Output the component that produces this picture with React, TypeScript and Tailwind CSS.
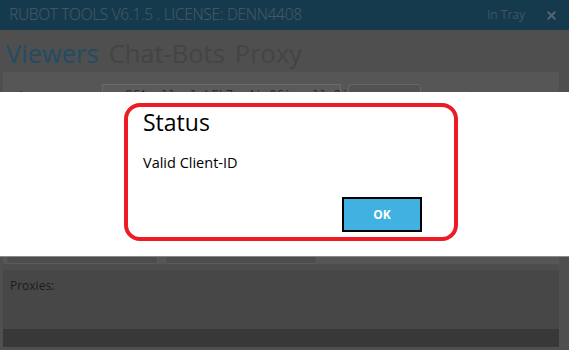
import { X } from "lucide-react";

export default function App() {
  return (
    <div className="relative w-[569px] h-[350px] overflow-hidden bg-[#4f4f4f] font-['Open_Sans',sans-serif]">
      {/* title bar */}
      <div className="h-[30px] bg-[#163a4d] flex items-center pl-[9px] pr-[11px]">
        <span className="text-[15.5px] font-light text-[#4a5c66] tracking-[-0.3px]">
          RUBOT TOOLS V6.1.5 . LICENSE: DENN4408
        </span>
        <span className="ml-auto text-[12px] text-[#3e5562]">In Tray</span>
        <X className="ml-[20px] w-[13px] h-[13px] text-[#55666f]" strokeWidth={3.5} />
      </div>

      {/* tabs */}
      <div className="h-[42px] flex items-center gap-[10px] pl-[6px] pt-[6px] text-[25.5px] leading-none">
        <span className="text-[#234c63]">Viewers</span>
        <span className="text-[#444444]">Chat-Bots</span>
        <span className="text-[#444444]">Proxy</span>
      </div>

      {/* content */}
      <div className="mx-[3px] w-[556px] h-[275px] flex flex-col bg-[#565656]">
        <div className="flex items-start gap-[7px] pt-[12px] pl-[9px] h-[192px]">
          <span className="w-[83px] text-[12px] text-[#1f1f1f] pt-[4px]">Client-ID</span>
          <div className="w-[239px] h-[24px] bg-[#5a5a5a] border border-[#6a6a6a] text-[12px] text-[#2a2a2a] px-[22px] pt-[2px] font-['Liberation_Mono',monospace]">
            8f1..ll..l.LFLZ..4i.6fi...ll.8i
          </div>
          <div className="w-[73px] h-[24px] bg-[#525252] border border-[#666666] rounded-[3px]" />
          <span className="text-[12px] text-[#25506a] pt-[4px]">Use... Client-ID</span>
        </div>
        <div className="flex gap-[7px] pl-[3px] -mt-[40px] h-[40px]">
          <div className="w-[152px] h-full bg-[#4d4d4d] border border-[#5b5b5b] rounded-[3px]" />
          <div className="w-[152px] h-full bg-[#4d4d4d] border border-[#5b5b5b] rounded-[3px]" />
        </div>
        <div className="h-[6px] bg-[#4d4d4d]" />
        <div className="flex-1 bg-[#474747] pl-[7px] pt-[8px] text-[12px] leading-[16px] text-[#1c1c1c]">
          Proxies:
        </div>
        <div className="h-[18px] bg-[#383838]" />
      </div>

      {/* status dialog */}
      <div className="absolute left-0 right-0 top-[92px] h-[165px] bg-white border-b border-[#8a8a8a] pt-[11px]">
        <div className="ml-[124px] w-[334px] h-[138px] border-[4px] border-[#ed1c24] rounded-[16px] flex flex-col pl-[15px] pr-[32px] pb-[5px]">
          <div className="text-[23px] leading-[30px] text-black">Status</div>
          <div className="mt-[16px] text-[14.5px] leading-[20px] text-black">Valid Client-ID</div>
          <div className="mt-auto flex justify-end">
            <button className="w-[80px] h-[35px] bg-[#41b1e1] border-2 border-black text-white text-[12px] font-bold">
              OK
            </button>
          </div>
        </div>
      </div>
    </div>
  );
}
